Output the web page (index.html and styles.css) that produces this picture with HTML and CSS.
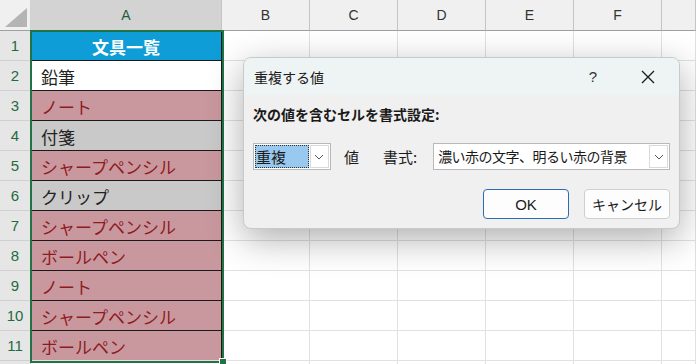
FILE: index.html
```html
<!DOCTYPE html>
<html lang="ja">
<head>
    <meta charset="UTF-8">
    <title>重複する値</title>
    <link rel="stylesheet" href="styles.css">
</head>
<body>
    <div class="sheet">
        <div class="row head">
            <div class="corner"><span class="tri"></span></div>
            <div class="colhead sel">A</div>
            <div class="colhead">B</div>
            <div class="colhead">C</div>
            <div class="colhead">D</div>
            <div class="colhead">E</div>
            <div class="colhead">F</div>
            <div class="colhead"></div>
        </div>
        <div class="row">
            <div class="rowhead">1</div>
            <div class="cell a title">文具一覧</div>
            <div class="cell"></div><div class="cell"></div><div class="cell"></div><div class="cell"></div><div class="cell"></div><div class="cell"></div>
        </div>
        <div class="row">
            <div class="rowhead">2</div>
            <div class="cell a">鉛筆</div>
            <div class="cell"></div><div class="cell"></div><div class="cell"></div><div class="cell"></div><div class="cell"></div><div class="cell"></div>
        </div>
        <div class="row">
            <div class="rowhead">3</div>
            <div class="cell a dup">ノート</div>
            <div class="cell"></div><div class="cell"></div><div class="cell"></div><div class="cell"></div><div class="cell"></div><div class="cell"></div>
        </div>
        <div class="row">
            <div class="rowhead">4</div>
            <div class="cell a grey">付箋</div>
            <div class="cell"></div><div class="cell"></div><div class="cell"></div><div class="cell"></div><div class="cell"></div><div class="cell"></div>
        </div>
        <div class="row">
            <div class="rowhead">5</div>
            <div class="cell a dup">シャープペンシル</div>
            <div class="cell"></div><div class="cell"></div><div class="cell"></div><div class="cell"></div><div class="cell"></div><div class="cell"></div>
        </div>
        <div class="row">
            <div class="rowhead">6</div>
            <div class="cell a grey">クリップ</div>
            <div class="cell"></div><div class="cell"></div><div class="cell"></div><div class="cell"></div><div class="cell"></div><div class="cell"></div>
        </div>
        <div class="row">
            <div class="rowhead">7</div>
            <div class="cell a dup">シャープペンシル</div>
            <div class="cell"></div><div class="cell"></div><div class="cell"></div><div class="cell"></div><div class="cell"></div><div class="cell"></div>
        </div>
        <div class="row">
            <div class="rowhead">8</div>
            <div class="cell a dup">ボールペン</div>
            <div class="cell"></div><div class="cell"></div><div class="cell"></div><div class="cell"></div><div class="cell"></div><div class="cell"></div>
        </div>
        <div class="row">
            <div class="rowhead">9</div>
            <div class="cell a dup">ノート</div>
            <div class="cell"></div><div class="cell"></div><div class="cell"></div><div class="cell"></div><div class="cell"></div><div class="cell"></div>
        </div>
        <div class="row">
            <div class="rowhead">10</div>
            <div class="cell a dup">シャープペンシル</div>
            <div class="cell"></div><div class="cell"></div><div class="cell"></div><div class="cell"></div><div class="cell"></div><div class="cell"></div>
        </div>
        <div class="row">
            <div class="rowhead">11</div>
            <div class="cell a dup last">ボールペン</div>
            <div class="cell"></div><div class="cell"></div><div class="cell"></div><div class="cell"></div><div class="cell"></div><div class="cell"></div>
        </div>
        <div class="row">
            <div class="rowhead"></div>
            <div class="cell"></div>
            <div class="cell"></div><div class="cell"></div><div class="cell"></div><div class="cell"></div><div class="cell"></div><div class="cell"></div>
        </div>

        <div class="selection"><span class="handle"></span></div>

        <div class="dialog">
            <div class="dlg-title">
                <span class="dlg-name">重複する値</span>
                <span class="dlg-help">?</span>
                <svg class="dlg-close" width="14" height="14" viewBox="0 0 14 14">
                    <path d="M1 1 L13 13 M13 1 L1 13" stroke="#1a1a1a" stroke-width="1.3" fill="none"/>
                </svg>
            </div>
            <div class="dlg-body">
                <p class="dlg-label">次の値を含むセルを書式設定:</p>
                <div class="dlg-line">
                    <div class="combo small">
                        <span class="combo-val picked">重複</span>
                        <span class="combo-btn">
                            <svg width="10" height="6" viewBox="0 0 10 6"><path d="M1 1 L5 5 L9 1" stroke="#555" stroke-width="1" fill="none"/></svg>
                        </span>
                    </div>
                    <span class="word">値</span>
                    <span class="word">書式:</span>
                    <div class="combo wide">
                        <span class="combo-val">濃い赤の文字、明るい赤の背景</span>
                        <span class="combo-btn">
                            <svg width="10" height="6" viewBox="0 0 10 6"><path d="M1 1 L5 5 L9 1" stroke="#555" stroke-width="1" fill="none"/></svg>
                        </span>
                    </div>
                </div>
                <div class="dlg-buttons">
                    <button class="btn ok">OK</button>
                    <button class="btn">キャンセル</button>
                </div>
            </div>
        </div>
    </div>
</body>
</html>
```

FILE: styles.css
```css
body {
    margin: 0;
    background: #ffffff;
    font-family: "Noto Sans CJK JP", "Noto Sans", sans-serif;
    overflow: hidden;
}

.sheet {
    position: relative;
    width: 696px;
    height: 364px;
    overflow: hidden;
}

.row {
    display: grid;
    grid-template-columns: 31px 191px 88px 88px 88px 88px 88px 34px;
    height: 30px;
}

.row.head {
    height: 31px;
}

.corner {
    position: relative;
    background: #f0f0f0;
    border-right: 1px solid #d2d2d2;
    border-bottom: 1px solid #a0a0a0;
}

.tri {
    position: absolute;
    right: 3px;
    bottom: 3px;
    width: 0;
    height: 0;
    border-left: 22px solid transparent;
    border-bottom: 19px solid #b4b4b4;
}

.colhead {
    display: flex;
    align-items: center;
    justify-content: center;
    background: #f0f0f0;
    border-right: 1px solid #c4c4c4;
    border-bottom: 1px solid #a0a0a0;
    font-family: "Liberation Sans", Arial, sans-serif;
    font-size: 14px;
    color: #333333;
}

.colhead.sel {
    background: #d3d3d3;
    color: #1d5e3b;
}

.rowhead {
    display: flex;
    align-items: center;
    justify-content: center;
    background: #e6e6e6;
    border-right: 1px solid #c4c4c4;
    border-bottom: 1px solid #d0d0d0;
    font-family: "Liberation Sans", Arial, sans-serif;
    font-size: 15px;
    color: #1e6b41;
}

.cell {
    border-right: 1px solid #e1e1e1;
    border-bottom: 1px solid #e1e1e1;
}

.cell.a {
    display: flex;
    align-items: center;
    padding: 1px 0 0 10px;
    font-size: 17px;
    color: #222222;
    background: #ffffff;
    border-right: 1px solid #1a1a1a;
    border-bottom: 1px solid #1a1a1a;
}

.cell.a.title {
    justify-content: center;
    padding-left: 0;
    background: #0e9dd6;
    color: #ffffff;
    font-weight: bold;
    font-size: 17px;
}

.cell.a.dup {
    background: #c9989e;
    color: #8e1b22;
}

.cell.a.grey {
    background: #c9c9c9;
    color: #222222;
}

.cell.a.last {
    border-bottom: 1px solid #e1e1e1;
}

.selection {
    position: absolute;
    left: 30px;
    top: 30px;
    width: 190px;
    height: 329px;
    border: 2px solid #217346;
}

.handle {
    position: absolute;
    right: -5px;
    bottom: -5px;
    width: 6px;
    height: 6px;
    background: #217346;
    border: 1px solid #ffffff;
}

/* dialog */

.dialog {
    position: absolute;
    left: 243px;
    top: 57px;
    width: 435px;
    height: 170px;
    border: 1px solid #c9c9c9;
    border-radius: 8px;
    background: #f0f0f0;
    box-shadow: 0 10px 36px rgba(0, 0, 0, 0.32);
    overflow: hidden;
    font-size: 14px;
    color: #1a1a1a;
}

.dlg-title {
    display: flex;
    align-items: center;
    height: 37px;
    padding: 0 0 0 10px;
    background: #eef3f4;
}

.dlg-name {
    flex: 1;
    font-size: 14px;
}

.dlg-help {
    width: 20px;
    margin-right: 38px;
    text-align: center;
    font-family: "Liberation Sans", Arial, sans-serif;
    font-size: 15px;
    color: #333333;
}

.dlg-close {
    margin-right: 24px;
}

.dlg-body {
    padding: 8px 9px 0 9px;
}

.dlg-label {
    margin: 0;
    font-weight: bold;
    font-size: 14px;
    line-height: 22px;
}

.dlg-line {
    display: flex;
    align-items: center;
    margin-top: 18px;
    height: 27px;
}

.combo {
    display: flex;
    align-items: center;
    height: 27px;
    box-sizing: border-box;
    border: 1px solid #b9b9b9;
    background: #ffffff;
    padding: 1px;
}

.combo.small {
    width: 78px;
}

.combo.wide {
    width: 237px;
    margin-left: 16px;
}

.combo-val {
    flex: 1;
    height: 23px;
    line-height: 23px;
    padding-left: 3px;
    font-size: 15px;
    white-space: nowrap;
    overflow: hidden;
}

.combo.wide .combo-val {
    font-size: 14px;
    letter-spacing: -0.5px;
}

.combo-val.picked {
    padding-left: 1px;
    background: #99c9ef;
    outline: 1px dotted #333333;
    outline-offset: -1px;
}

.combo-btn {
    display: flex;
    align-items: center;
    justify-content: center;
    width: 19px;
    height: 23px;
    margin-left: 1px;
    border: 1px solid #dadada;
    box-sizing: border-box;
    background: #ffffff;
}

.word {
    margin-left: 13px;
    font-size: 15px;
}

.word + .word {
    margin-left: 24px;
}

.dlg-buttons {
    display: flex;
    justify-content: flex-end;
    gap: 15px;
    margin-top: 19px;
}

.btn {
    width: 86px;
    height: 30px;
    border: 1px solid #d0d0d0;
    border-radius: 4px;
    background: #fdfdfd;
    font-family: "Noto Sans CJK JP", sans-serif;
    font-size: 14px;
    color: #1a1a1a;
}

.btn.ok {
    border-color: #2a6db5;
    font-family: "Liberation Sans", Arial, sans-serif;
    font-size: 15px;
}
```
